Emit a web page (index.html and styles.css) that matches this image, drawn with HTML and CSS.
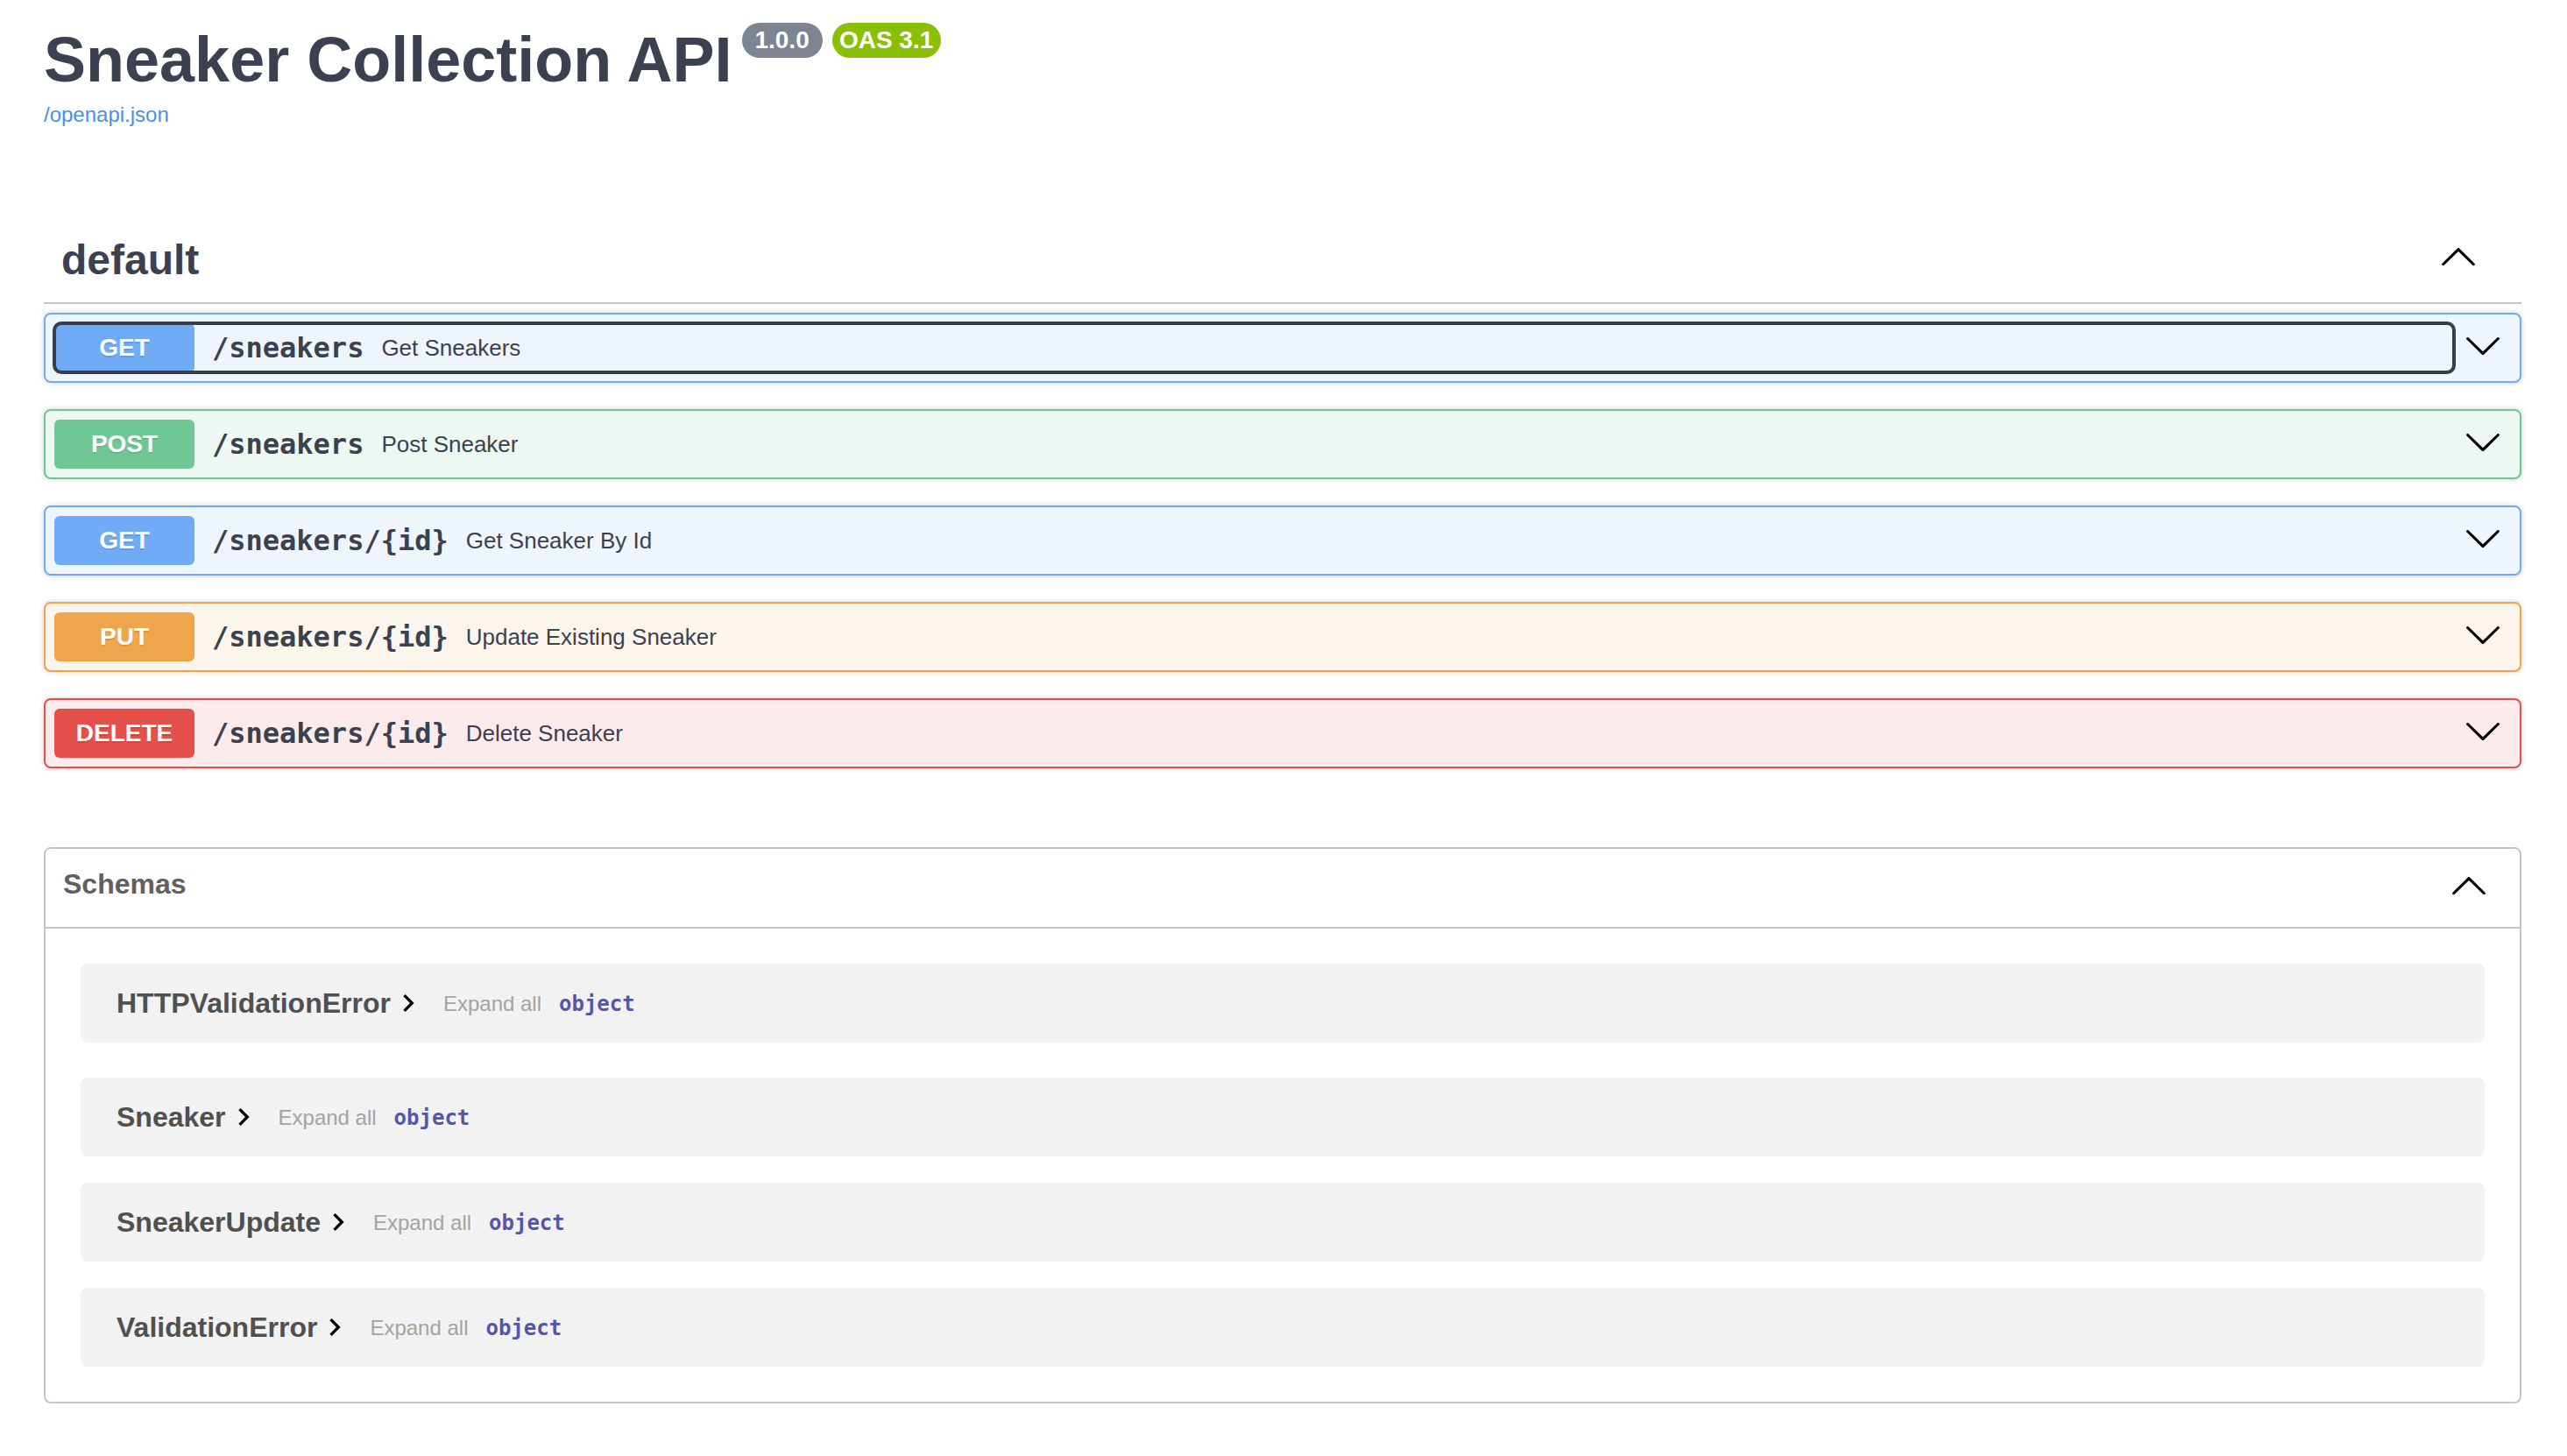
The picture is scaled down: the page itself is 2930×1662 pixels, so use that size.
FILE: index.html
```html
<!DOCTYPE html>
<html lang="en">
<head>
<meta charset="utf-8">
<title>Sneaker Collection API - Swagger UI</title>
<link rel="stylesheet" href="styles.css">
</head>
<body>
<div class="wrapper">
  <div class="info">
    <h2 class="title"><span class="title-text">Sneaker Collection API</span><span class="stamp stamp-version">1.0.0</span><span class="stamp stamp-oas">OAS 3.1</span></h2>
    <a class="spec-link" href="#">/openapi.json</a>
  </div>

  <section class="tag-section">
    <h3 class="opblock-tag">
      <span class="tag-name">default</span>
      <button class="tag-toggle" type="button" aria-label="Collapse operation">
        <svg class="arrow" viewBox="0 0 20 20" aria-hidden="true"><path d="M17.418 14.908c.272.268.709.268.979 0s.271-.701 0-.969l-7.908-7.83c-.27-.268-.707-.268-.979 0l-7.908 7.83c-.27.268-.27.701 0 .969.271.268.709.268.979 0L10 7.72l7.418 7.188z"/></svg>
      </button>
    </h3>

    <div class="opblock op-get">
      <div class="summary">
        <div class="summary-control focused">
          <span class="method">GET</span>
          <span class="path">/sneakers</span>
          <span class="desc">Get Sneakers</span>
        </div>
        <button class="op-arrow" type="button" aria-label="Expand operation">
          <svg class="arrow" viewBox="0 0 20 20" aria-hidden="true"><path d="M17.418 6.109c.272-.268.709-.268.979 0s.271.701 0 .969l-7.908 7.83c-.27.268-.707.268-.979 0l-7.908-7.83c-.27-.268-.27-.701 0-.969.271-.268.709-.268.979 0L10 13.25l7.418-7.141z"/></svg>
        </button>
      </div>
    </div>

    <div class="opblock op-post">
      <div class="summary">
        <div class="summary-control">
          <span class="method">POST</span>
          <span class="path">/sneakers</span>
          <span class="desc">Post Sneaker</span>
        </div>
        <button class="op-arrow" type="button" aria-label="Expand operation">
          <svg class="arrow" viewBox="0 0 20 20" aria-hidden="true"><path d="M17.418 6.109c.272-.268.709-.268.979 0s.271.701 0 .969l-7.908 7.83c-.27.268-.707.268-.979 0l-7.908-7.83c-.27-.268-.27-.701 0-.969.271-.268.709-.268.979 0L10 13.25l7.418-7.141z"/></svg>
        </button>
      </div>
    </div>

    <div class="opblock op-get">
      <div class="summary">
        <div class="summary-control">
          <span class="method">GET</span>
          <span class="path">/sneakers/{id}</span>
          <span class="desc">Get Sneaker By Id</span>
        </div>
        <button class="op-arrow" type="button" aria-label="Expand operation">
          <svg class="arrow" viewBox="0 0 20 20" aria-hidden="true"><path d="M17.418 6.109c.272-.268.709-.268.979 0s.271.701 0 .969l-7.908 7.83c-.27.268-.707.268-.979 0l-7.908-7.83c-.27-.268-.27-.701 0-.969.271-.268.709-.268.979 0L10 13.25l7.418-7.141z"/></svg>
        </button>
      </div>
    </div>

    <div class="opblock op-put">
      <div class="summary">
        <div class="summary-control">
          <span class="method">PUT</span>
          <span class="path">/sneakers/{id}</span>
          <span class="desc">Update Existing Sneaker</span>
        </div>
        <button class="op-arrow" type="button" aria-label="Expand operation">
          <svg class="arrow" viewBox="0 0 20 20" aria-hidden="true"><path d="M17.418 6.109c.272-.268.709-.268.979 0s.271.701 0 .969l-7.908 7.83c-.27.268-.707.268-.979 0l-7.908-7.83c-.27-.268-.27-.701 0-.969.271-.268.709-.268.979 0L10 13.25l7.418-7.141z"/></svg>
        </button>
      </div>
    </div>

    <div class="opblock op-delete">
      <div class="summary">
        <div class="summary-control">
          <span class="method">DELETE</span>
          <span class="path">/sneakers/{id}</span>
          <span class="desc">Delete Sneaker</span>
        </div>
        <button class="op-arrow" type="button" aria-label="Expand operation">
          <svg class="arrow" viewBox="0 0 20 20" aria-hidden="true"><path d="M17.418 6.109c.272-.268.709-.268.979 0s.271.701 0 .969l-7.908 7.83c-.27.268-.707.268-.979 0l-7.908-7.83c-.27-.268-.27-.701 0-.969.271-.268.709-.268.979 0L10 13.25l7.418-7.141z"/></svg>
        </button>
      </div>
    </div>
  </section>

  <section class="models">
    <h4 class="models-head">
      <span class="models-title">Schemas</span>
      <svg class="arrow" viewBox="0 0 20 20" aria-hidden="true"><path d="M17.418 14.908c.272.268.709.268.979 0s.271-.701 0-.969l-7.908-7.83c-.27-.268-.707-.268-.979 0l-7.908 7.83c-.27.268-.27.701 0 .969.271.268.709.268.979 0L10 7.72l7.418 7.188z"/></svg>
    </h4>
    <div class="models-body">
      <div class="model-row">
        <span class="model-title">HTTPValidationError<svg class="chev" viewBox="0 0 24 24" aria-hidden="true"><path d="M10 6L8.59 7.41 13.17 12l-4.58 4.59L10 18l6-6z"/></svg></span>
        <span class="expand-all">Expand all</span>
        <span class="prop-type">object</span>
      </div>
      <div class="model-row">
        <span class="model-title">Sneaker<svg class="chev" viewBox="0 0 24 24" aria-hidden="true"><path d="M10 6L8.59 7.41 13.17 12l-4.58 4.59L10 18l6-6z"/></svg></span>
        <span class="expand-all">Expand all</span>
        <span class="prop-type">object</span>
      </div>
      <div class="model-row">
        <span class="model-title">SneakerUpdate<svg class="chev" viewBox="0 0 24 24" aria-hidden="true"><path d="M10 6L8.59 7.41 13.17 12l-4.58 4.59L10 18l6-6z"/></svg></span>
        <span class="expand-all">Expand all</span>
        <span class="prop-type">object</span>
      </div>
      <div class="model-row">
        <span class="model-title">ValidationError<svg class="chev" viewBox="0 0 24 24" aria-hidden="true"><path d="M10 6L8.59 7.41 13.17 12l-4.58 4.59L10 18l6-6z"/></svg></span>
        <span class="expand-all">Expand all</span>
        <span class="prop-type">object</span>
      </div>
    </div>
  </section>
</div>
</body>
</html>
```

FILE: styles.css
```css
* { box-sizing: border-box; }

html, body {
  margin: 0;
  padding: 0;
  background: #ffffff;
}

body {
  font-family: "Liberation Sans", Arial, Helvetica, sans-serif;
  color: #3b4151;
}

.wrapper {
  padding: 0 52px 0 50px;
}

/* ---------- info ---------- */
.info {
  padding-top: 32px;
  margin-bottom: 105px;
}

.title {
  display: flex;
  align-items: flex-start;
  margin: 0;
  font-size: 72px;
  line-height: 72px;
  font-weight: 700;
  color: #3b4151;
}

.stamp {
  display: inline-block;
  margin-top: -6px;
  height: 40px;
  border-radius: 114px;
  font-size: 28px;
  line-height: 40px;
  font-weight: 700;
  color: #ffffff;
  text-align: center;
}

.stamp-version {
  margin-left: 11px;
  width: 92px;
  background: #7d8492;
}

.stamp-oas {
  margin-left: 11px;
  width: 124px;
  background: #89bf04;
}

.spec-link {
  display: block;
  margin-top: 13px;
  font-size: 24px;
  line-height: 28px;
  color: #4990e2;
  text-decoration: none;
}

/* ---------- tag ---------- */
.tag-section {
  display: flex;
  flex-direction: column;
}

.opblock-tag {
  display: flex;
  align-items: center;
  margin: 0 0 10px;
  padding: 19px 40px 21px 20px;
  border-bottom: 2px solid rgba(59, 65, 81, 0.3);
  font-size: 48px;
  line-height: 55px;
  font-weight: 700;
  color: #3b4151;
}

.tag-name {
  flex: 1;
}

.tag-toggle {
  display: flex;
  border: 0;
  background: none;
  padding: 0 10px 0 0;
  margin: 0 0 9px 0;
}

.arrow {
  width: 44px;
  height: 44px;
  fill: #000000;
  display: block;
}

/* ---------- operations ---------- */
.opblock {
  margin: 0 0 30px;
  border: 2px solid #000;
  border-radius: 8px;
  box-shadow: 0 0 6px rgba(0, 0, 0, 0.19);
}

.summary {
  display: flex;
  align-items: center;
  padding: 10px;
}

.summary-control {
  flex: 1;
  display: flex;
  align-items: center;
  border-radius: 8px;
}

.summary-control.focused {
  outline: 4px solid #383e4b;
  outline-offset: -2px;
}

.method {
  min-width: 160px;
  padding: 12px 0;
  border-radius: 6px;
  font-size: 28px;
  line-height: 32px;
  font-weight: 700;
  color: #ffffff;
  text-align: center;
  text-shadow: 0 2px 0 rgba(0, 0, 0, 0.1);
}

.path {
  padding: 0 20px;
  font-family: "DejaVu Sans Mono", "Liberation Mono", monospace;
  font-size: 32px;
  font-weight: 700;
  color: #3b4151;
}

.desc {
  font-size: 26px;
  color: #3b4151;
}

.op-arrow {
  display: flex;
  border: 0;
  background: none;
  padding: 0 10px 0 11px;
  margin: 0 0 6px 0;
}

.op-get { background: #eff5fd; border-color: #70acf6; }
.op-get .method { background: #70acf6; }

.op-post { background: #eef8f2; border-color: #6fc793; }
.op-post .method { background: #6fc793; }

.op-put { background: #fcf5eb; border-color: #eea54b; }
.op-put .method { background: #eea54b; }

.op-delete { background: #fbebeb; border-color: #e4504a; }
.op-delete .method { background: #e4504a; }

/* ---------- models ---------- */
.models {
  margin: 60px 0 0;
  border: 2px solid rgba(59, 65, 81, 0.3);
  border-radius: 8px;
}

.models-head {
  display: flex;
  align-items: center;
  margin: 0;
  padding: 16px 36px 24px 20px;
  border-bottom: 2px solid rgba(59, 65, 81, 0.3);
  font-size: 32px;
  line-height: 49px;
  font-weight: 700;
  color: #606060;
}

.models-title {
  flex: 1;
}

.models-body {
  padding-bottom: 40px;
}

.model-row {
  display: flex;
  align-items: center;
  height: 90px;
  margin: 0 40px 30px;
  padding-left: 41px;
  border-radius: 8px;
  background: rgba(0, 0, 0, 0.05);
}

.model-row:first-child {
  margin: 40px;
}

.model-row:last-child {
  margin: 0 40px;
}

.model-title {
  display: flex;
  align-items: center;
  font-size: 32px;
  font-weight: 700;
  color: #505050;
}

.chev {
  width: 40px;
  height: 40px;
  margin-left: 0;
  fill: #000000;
}

.expand-all {
  margin-left: 20px;
  padding-top: 2px;
  font-size: 24px;
  color: #a3a3a3;
}

.prop-type {
  margin-left: 20px;
  padding-top: 2px;
  font-family: "DejaVu Sans Mono", "Liberation Mono", monospace;
  font-size: 24px;
  font-weight: 700;
  color: #5555aa;
}
```
